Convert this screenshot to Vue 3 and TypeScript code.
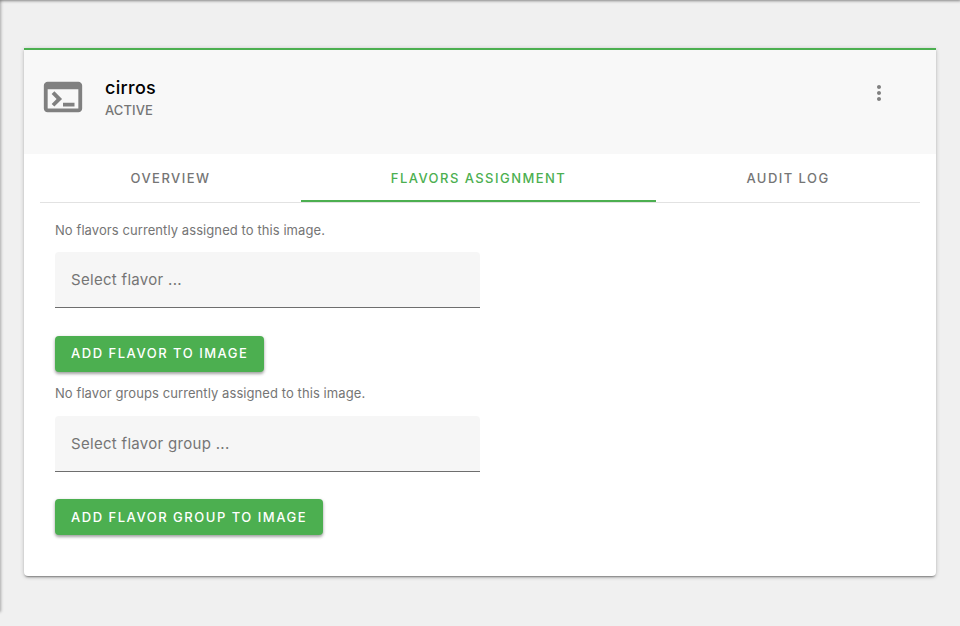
<script setup lang="ts">
const tabs = [
  { label: 'OVERVIEW', width: 261, active: false },
  { label: 'FLAVORS ASSIGNMENT', width: 355, active: true },
  { label: 'AUDIT LOG', width: 264, active: false },
]
</script>

<template>
  <div class="page">
    <div class="edge-top"></div>
    <div class="edge-left"></div>
    <section class="card">
      <header class="head">
        <svg class="term" width="46" height="46" viewBox="0 0 24 24" fill="#808080">
          <path d="M20 4H4c-1.11 0-2 .9-2 2v12c0 1.1.89 2 2 2h16c1.1 0 2-.9 2-2V6c0-1.1-.89-2-2-2zm0 14H4V8h16v10zm-2-1h-6v-2h6v2zM7.5 17l-1.41-1.41L8.67 13l-2.59-2.59L7.5 9l4 4-4 4z" />
        </svg>
        <div class="titles">
          <div class="name">cirros</div>
          <div class="status">ACTIVE</div>
        </div>
        <svg class="more" width="24" height="24" viewBox="0 0 24 24" fill="#808080">
          <path d="M12 8c1.1 0 2-.9 2-2s-.9-2-2-2-2 .9-2 2 .9 2 2 2zm0 2c-1.1 0-2 .9-2 2s.9 2 2 2 2-.9 2-2-.9-2-2-2zm0 6c-1.1 0-2 .9-2 2s.9 2 2 2 2-.9 2-2-.9-2-2-2z" />
        </svg>
      </header>
      <nav class="tabs">
        <div
          v-for="t in tabs"
          :key="t.label"
          class="tab"
          :class="{ active: t.active }"
          :style="{ width: t.width + 'px' }"
        >{{ t.label }}</div>
      </nav>
      <div class="body">
        <p class="note">No flavors currently assigned to this image.</p>
        <div class="field">Select flavor ...</div>
        <button class="btn first">ADD FLAVOR TO IMAGE</button>
        <p class="note second">No flavor groups currently assigned to this image.</p>
        <div class="field">Select flavor group ...</div>
        <button class="btn last">ADD FLAVOR GROUP TO IMAGE</button>
      </div>
    </section>
  </div>
</template>

<style>
html, body { margin: 0; background: #f0f0f0; }
</style>

<style scoped>
.page {
  position: relative;
  height: 626px;
  overflow: hidden;
  box-sizing: border-box;
  padding: 48px 24px 0;
  background: #f0f0f0;
  font-family: Inter, "Open Sans", sans-serif;
}
.edge-top {
  position: absolute;
  top: -2px;
  left: 0;
  right: 0;
  height: 2px;
  box-shadow: 0 0 3px 1px rgba(0, 0, 0, 0.45);
}
.edge-left {
  position: absolute;
  top: 0;
  left: -2px;
  width: 2px;
  height: 611px;
  box-shadow: 0 0 3px 1px rgba(0, 0, 0, 0.3);
}
.card {
  height: 528px;
  box-sizing: border-box;
  background: #fff;
  border-top: 2px solid #4caf50;
  border-radius: 0 0 4px 4px;
  box-shadow: 0 2px 2px -1px rgba(0, 0, 0, 0.4), 0 1px 4px 0 rgba(0, 0, 0, 0.22);
}
.head {
  display: flex;
  align-items: flex-start;
  height: 104px;
  box-sizing: border-box;
  padding: 24px 45px 0 16px;
  background: #f8f8f8;
}
.term { flex: none; }
.titles { margin-left: 19px; flex: 1; }
.name {
  margin-top: 1px;
  font-size: 18px;
  line-height: 26px;
  font-weight: 500;
  letter-spacing: 0.3px;
  color: #000;
}
.status {
  font-size: 13px;
  line-height: 18px;
  font-weight: 500;
  letter-spacing: 0.1px;
  color: #757575;
}
.more { flex: none; margin-top: 7px; }
.tabs {
  display: flex;
  margin: 0 16px;
  height: 49px;
  box-sizing: border-box;
  border-bottom: 1px solid #e2e2e2;
}
.tab {
  height: 48px;
  box-sizing: border-box;
  display: flex;
  align-items: center;
  justify-content: center;
  font-size: 13px;
  font-weight: 500;
  letter-spacing: 1.45px;
  color: #757575;
}
.tab.active {
  color: #4caf50;
  padding-top: 2px;
  border-bottom: 2px solid #4caf50;
}
.body { padding: 18px 31px 0; }
.note {
  margin: 0;
  font-size: 13px;
  line-height: 19px;
  letter-spacing: 0.08px;
  color: #757575;
}
.note.second { margin-top: 12px; margin-bottom: 13px; }
.field {
  width: 425px;
  height: 56px;
  margin-top: 12px;
  box-sizing: border-box;
  padding-left: 16px;
  display: flex;
  align-items: center;
  background: #f6f6f6;
  border-bottom: 1px solid #6e6e6e;
  border-radius: 4px 4px 0 0;
  font-size: 15px;
  letter-spacing: 0.3px;
  color: #757575;
}
.note.second + .field { margin-top: 0; }
.btn {
  display: block;
  height: 36px;
  margin-top: 28px;
  padding: 0 16px;
  border: 0;
  border-radius: 4px;
  background: #4caf50;
  color: #fff;
  font-family: inherit;
  font-size: 13px;
  font-weight: 500;
  letter-spacing: 1.52px;
  box-shadow: 0 2px 3px 0 rgba(0, 0, 0, 0.3), 0 1px 4px 0 rgba(0, 0, 0, 0.12);
}
.btn.first { padding-bottom: 2px; }
.btn.last { margin-top: 27px; }
</style>
